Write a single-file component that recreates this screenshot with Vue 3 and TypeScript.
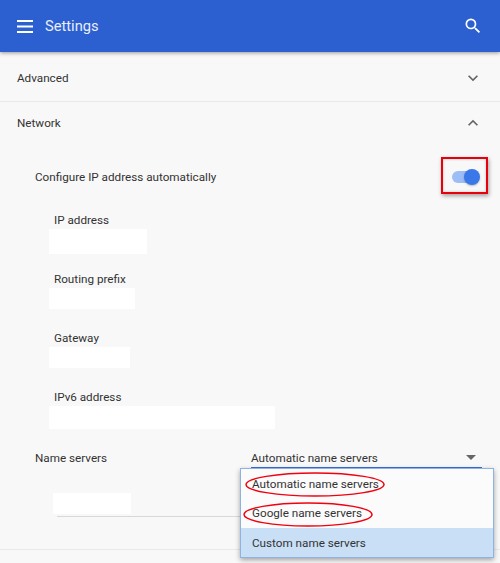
<script setup lang="ts">
interface Field { label: string; width: number; height: number }
const fields: Field[] = [
  { label: 'IP address', width: 98, height: 25 },
  { label: 'Routing prefix', width: 86, height: 21 },
  { label: 'Gateway', width: 81, height: 21 },
  { label: 'IPv6 address', width: 226, height: 23 },
]
const options = ['Automatic name servers', 'Google name servers', 'Custom name servers']
</script>

<template>
  <div class="page">
    <header class="bar">
      <svg class="menu" width="16" height="13" viewBox="0 0 16 13"><path d="M0 0h16v2H0zM0 5.5h16v2H0zM0 11h16v2H0z" fill="#fff"/></svg>
      <span class="title">Settings</span>
      <svg class="search" width="20" height="20" viewBox="0 0 24 24"><path d="M15.5 14h-.79l-.28-.27A6.47 6.47 0 0 0 16 9.5 6.5 6.5 0 1 0 9.5 16c1.61 0 3.09-.59 4.23-1.57l.27.28v.79l5 4.99L20.49 19l-4.99-5zm-6 0C7.01 14 5 11.99 5 9.5S7.01 5 9.5 5 14 7.01 14 9.5 11.99 14 9.5 14z" fill="#fff"/></svg>
    </header>

    <section class="row first">
      <span>Advanced</span>
      <svg class="chev" width="20" height="20" viewBox="0 0 24 24"><path d="M7.41 8.59 12 13.17l4.59-4.58L18 10l-6 6-6-6z" fill="#646464"/></svg>
    </section>
    <section class="row second">
      <span>Network</span>
      <svg class="chev" width="20" height="20" viewBox="0 0 24 24"><path d="M7.41 15.41 12 10.83l4.59 4.58L18 14l-6-6-6 6z" fill="#646464"/></svg>
    </section>

    <div class="network">
      <div class="auto">
        <span>Configure IP address automatically</span>
        <div class="toggle"><i class="track"></i><i class="knob"></i></div>
      </div>

      <div v-for="f in fields" :key="f.label" class="field">
        <label>{{ f.label }}</label>
        <div class="box" :style="{ width: f.width + 'px', height: f.height + 'px' }"></div>
      </div>

      <div class="servers">
        <span>Name servers</span>
        <div class="select">
          <span>Automatic name servers</span>
          <i class="arrow"></i>
        </div>
      </div>
      <div class="custom"><div class="custom-box"></div></div>
    </div>
    <div class="end"></div>

    <ul class="menu-list">
      <li v-for="(o, i) in options" :key="o" :class="{ active: i === 2 }">{{ o }}</li>
    </ul>

    <div class="mark-rect"></div>
    <svg class="ellipses" width="160" height="60" viewBox="0 0 160 60">
      <ellipse cx="72" cy="14.5" rx="69" ry="11.5" fill="none" stroke="#f00010" stroke-width="1.5"/>
      <ellipse cx="65" cy="44.5" rx="64" ry="11.5" fill="none" stroke="#f00010" stroke-width="1.5"/>
    </svg>
  </div>
</template>

<style>
html, body { margin: 0; background: #f8f8f8; }
</style>

<style scoped>
.page {
  position: relative;
  width: 500px;
  height: 563px;
  overflow: hidden;
  background: #f8f8f8;
  font-family: Roboto, "Liberation Sans", sans-serif;
  font-size: 11.7px;
  color: #333;
}
.bar {
  height: 52px;
  background: #2c5fcf;
  box-shadow: 0 1px 4px rgba(0, 0, 0, .4);
  display: flex;
  align-items: center;
  padding: 0 17px 0 17px;
  box-sizing: border-box;
  color: #fff;
}
.menu { flex: none; }
.title { margin-left: 12px; font-size: 14.7px; flex: 1; color: #e8eefb; }
.row {
  display: flex;
  align-items: center;
  justify-content: space-between;
  padding: 0 17px;
  box-sizing: border-box;
}
.first { height: 50px; padding-top: 3px; border-bottom: 1px solid #e9e9e9; }
.second { height: 44px; padding-bottom: 2px; }
.chev { flex: none; }
.network { padding-left: 35px; }
.auto {
  display: flex;
  align-items: center;
  justify-content: space-between;
  height: 34px;
  margin-top: 14px;
  margin-bottom: 16px;
  padding-right: 20px;
}
.toggle { position: relative; width: 28px; height: 16px; }
.track {
  position: absolute;
  left: 0; top: 2px;
  width: 26px; height: 12px;
  border-radius: 6px;
  background: #9dbdf6;
}
.knob {
  position: absolute;
  right: 0; top: 0;
  width: 16px; height: 16px;
  border-radius: 50%;
  background: #3a77e8;
  box-shadow: 0 1px 2px rgba(0,0,0,.25);
}
.field {
  height: 59px;
  padding-left: 19px;
  box-sizing: border-box;
}
.field label {
  display: block;
  height: 19px;
  line-height: 20px;
}
.box { background: #fff; margin-left: -5px; }
.servers {
  display: flex;
  align-items: center;
  height: 24px;
}
.servers > span { width: 216px; flex: none; }
.select {
  width: 231px;
  height: 19px;
  display: flex;
  align-items: center;
  justify-content: space-between;
  border-bottom: 1px solid #3a6fd8;
  padding-right: 6px;
  box-sizing: border-box;
}
.arrow {
  width: 0; height: 0;
  border-left: 5px solid transparent;
  border-right: 5px solid transparent;
  border-top: 5px solid #666;
}
.custom {
  margin-left: 22px;
  margin-top: 23px;
  height: 24px;
  width: 400px;
  border-bottom: 1px solid #d8d8d8;
  box-sizing: border-box;
}
.custom-box { width: 78px; height: 21px; background: #fff; margin-left: -4px; }
.end { border-bottom: 1px solid #e9e9e9; margin-top: 32px; }
.menu-list {
  position: absolute;
  left: 240px; top: 468px;
  width: 254px;
  margin: 0; padding: 0;
  list-style: none;
  background: #fbfbfb;
  border: 1px solid #8fb2e3;
  box-sizing: border-box;
  box-shadow: 0 2px 5px rgba(0,0,0,.35);
}
.menu-list li {
  height: 29.33px;
  line-height: 31px;
  padding-left: 11px;
}
.menu-list li.active { background: #c8dff6; }
.mark-rect {
  position: absolute;
  left: 441px; top: 157px;
  width: 47px; height: 37px;
  box-sizing: border-box;
  border: 2px solid #e8000b;
  box-shadow: 1px 2px 4px rgba(0,0,0,.35), inset 0 0 3px rgba(0,0,0,.2);
}
.ellipses {
  position: absolute;
  left: 243px; top: 470px;
}
</style>
